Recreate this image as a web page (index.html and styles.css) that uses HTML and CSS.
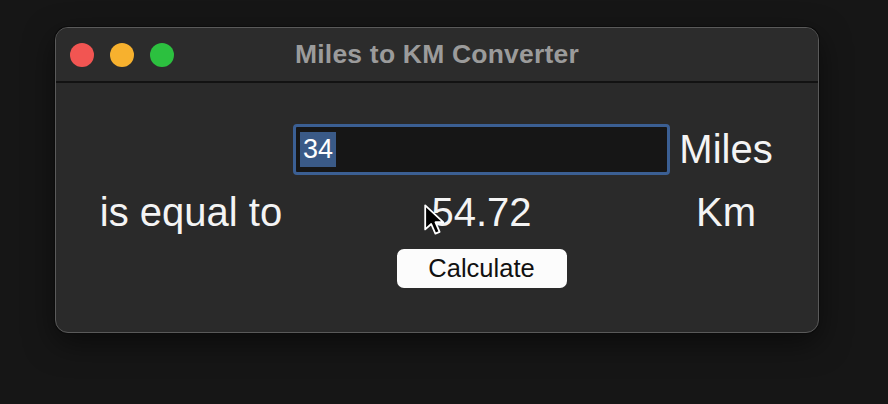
FILE: index.html
```html
<!DOCTYPE html>
<html>
<head>
<meta charset="utf-8">
<link rel="stylesheet" href="styles.css">
</head>
<body>
<div class="window">
  <div class="titlebar">
    <div class="lights">
      <span class="light red"></span>
      <span class="light yellow"></span>
      <span class="light green"></span>
    </div>
    <div class="title">Miles to KM Converter</div>
  </div>
  <div class="content">
    <div class="cell"></div>
    <div class="cell entry-cell"><div class="entry"><span class="sel">34</span></div></div>
    <div class="cell label">Miles</div>
    <div class="cell label">is equal to</div>
    <div class="cell label"><span class="result">54.72<svg class="cursor" width="24" height="34" viewBox="0 0 20 28"><path d="M1 1 L1 21 L6 16.5 L9.5 24.5 L13 23 L9.5 15 L16 15 Z" fill="#000" stroke="#fff" stroke-width="1.5" stroke-linejoin="round"/></svg></span></div>
    <div class="cell label">Km</div>
    <div class="cell"></div>
    <div class="cell"><button class="btn">Calculate</button></div>
    <div class="cell"></div>
  </div>
</div>
</body>
</html>
```
FILE: styles.css
```css
html, body {
  margin: 0;
  padding: 0;
}
body {
  background: #161616;
  width: 888px;
  height: 404px;
  overflow: hidden;
  padding: 27px 0 0 55px;
  box-sizing: border-box;
  font-family: "Liberation Sans", Arial, sans-serif;
}
.window {
  width: 764px;
  height: 306px;
  box-sizing: border-box;
  background: #2a2a2a;
  border: 1px solid #5a5a5a;
  border-radius: 13px;
  box-shadow: 0 0 0 1px #0c0c0c, 0 10px 30px rgba(0,0,0,0.5);
  overflow: hidden;
}
.titlebar {
  height: 53px;
  border-bottom: 2px solid #121212;
  display: flex;
  align-items: center;
  position: relative;
  background: #2c2c2c;
}
.lights {
  display: flex;
  gap: 16px;
  padding-left: 14px;
}
.light {
  width: 24px;
  height: 24px;
  border-radius: 50%;
  display: block;
}
.red { background: #f25552; }
.yellow { background: #f7b12e; }
.green { background: #2cc03f; }
.title {
  position: absolute;
  left: 0;
  right: 0;
  top: 0;
  bottom: 0;
  display: flex;
  align-items: center;
  justify-content: center;
  color: #9b9b9b;
  font-weight: bold;
  font-size: 26.5px;
  letter-spacing: 0.2px;
}
.content {
  display: grid;
  grid-template-columns: 198px 383px 106px;
  grid-template-rows: 52px 75px 40px;
  padding: 40px 0 0 36px;
}
.cell {
  display: flex;
  align-items: center;
  justify-content: center;
}
.label {
  color: #f4f4f4;
  font-size: 40px;
}
.result {
  position: relative;
}
.entry {
  width: 377px;
  height: 51px;
  box-sizing: border-box;
  border: 3px solid #3b5f93;
  border-radius: 4px;
  background: #161616;
  display: flex;
  align-items: center;
  padding-left: 4px;
}
.sel {
  background: #3a5a87;
  color: #ffffff;
  font-size: 27px;
  height: 35px;
  line-height: 35px;
  padding: 0 3px 0 3px;
}
.btn {
  width: 170px;
  height: 39px;
  background: #fcfcfc;
  border: none;
  border-radius: 7px;
  font-family: "Liberation Sans", Arial, sans-serif;
  font-size: 25.5px;
  color: #111;
  padding: 0;
  margin-top: -3px;
}
.cursor {
  position: absolute;
  left: -7px;
  top: 14px;
}
```
